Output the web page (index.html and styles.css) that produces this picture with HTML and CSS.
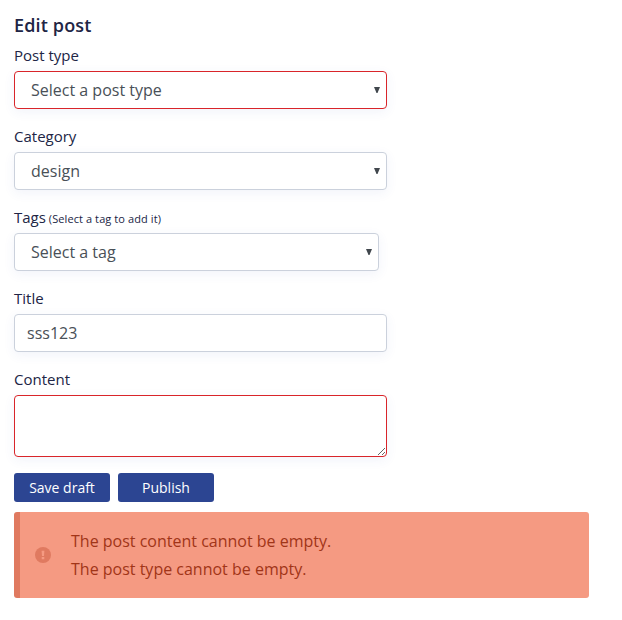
FILE: index.html
```html
<!DOCTYPE html>
<html lang="en">
<head>
<meta charset="utf-8">
<title>Edit post</title>
<link rel="stylesheet" href="styles.css">
</head>
<body>
<main class="page">
  <h1 class="heading">Edit post</h1>
  <form class="form">
    <div class="field">
      <label class="label">Post type</label>
      <div class="select invalid"><span>Select a post type</span><svg class="arrow" viewBox="0 0 6 6"><path d="M0 0h6L3.5 6h-1z"/></svg></div>
    </div>
    <div class="field">
      <label class="label">Category</label>
      <div class="select"><span>design</span><svg class="arrow" viewBox="0 0 6 6"><path d="M0 0h6L3.5 6h-1z"/></svg></div>
    </div>
    <div class="field">
      <label class="label">Tags <small class="hint">(Select a tag to add it)</small></label>
      <div class="select narrow"><span>Select a tag</span><svg class="arrow" viewBox="0 0 6 6"><path d="M0 0h6L3.5 6h-1z"/></svg></div>
    </div>
    <div class="field">
      <label class="label" for="title">Title</label>
      <input class="input" id="title" type="text" value="sss123">
    </div>
    <div class="field last">
      <label class="label" for="content">Content</label>
      <textarea class="textarea invalid" id="content"></textarea>
    </div>
    <div class="actions">
      <button class="button" type="button">Save draft</button>
      <button class="button" type="button">Publish</button>
    </div>
  </form>
  <div class="alert" role="alert">
    <svg class="alert-icon" viewBox="0 0 16 16"><circle cx="8" cy="8" r="8"/><path class="mark" d="M6.6 3.8h2.8L9 9H7zM6.7 10h2.6v2.2H6.7z"/></svg>
    <div class="messages"><p>The post content cannot be empty.</p><p>The post type cannot be empty.</p></div>
  </div>
</main>
</body>
</html>
```
FILE: styles.css
```css
* { box-sizing: border-box; }
body { margin: 0; background: #fff; font-family: "Open Sans", sans-serif; color: #212545; }
.page { padding: 13px 14px 0; }
.heading { margin: 0; height: 31px; font-size: 18px; line-height: 24px; font-weight: 600; letter-spacing: .15px; }
.form { width: 373px; }
.field { height: 81px; }
.field.last { height: 105px; }
.label { display: block; height: 27px; padding-top: 1px; font-size: 15px; line-height: 20px; }
.hint { margin-left: -1px; font-size: 11px; letter-spacing: .09px; }
.select, .input, .textarea {
  display: block; width: 100%; height: 38px; margin: 0; background: #fff;
  border: 1px solid #cbd1dc; border-radius: 4px; outline: 0;
  box-shadow: 0 3px 12px rgba(60, 80, 190, .07);
  font: 16px/24px "Open Sans", sans-serif; color: #495057;
}
.select { display: flex; align-items: center; justify-content: space-between; padding: 0 6px 0 16px; }
.narrow { width: 365px; }
.arrow { width: 6px; height: 6px; fill: #41474d; }
.input { padding: 0 12px; }
.textarea { height: 62px; padding: 6px 12px; resize: vertical; }
.select.invalid, .textarea.invalid { border-color: #d9252a; }
.actions { display: flex; gap: 8px; height: 39px; }
.button { width: 96px; height: 29px; padding: 0; border: 0; border-radius: 3px; background: #2c4592; color: #fff; font: 14px/29px "Open Sans", sans-serif; }
.alert { display: flex; align-items: center; width: 575px; height: 86px; padding-left: 15px; border-left: 6px solid #e07a60; border-radius: 3px; background: #f59a82; }
.alert-icon { width: 16px; height: 16px; fill: #e07a60; }
.mark { fill: #f59a82; }
.messages { margin-left: 20px; font-size: 16px; line-height: 28px; color: #a13518; }
.messages p { margin: 0; }
```
